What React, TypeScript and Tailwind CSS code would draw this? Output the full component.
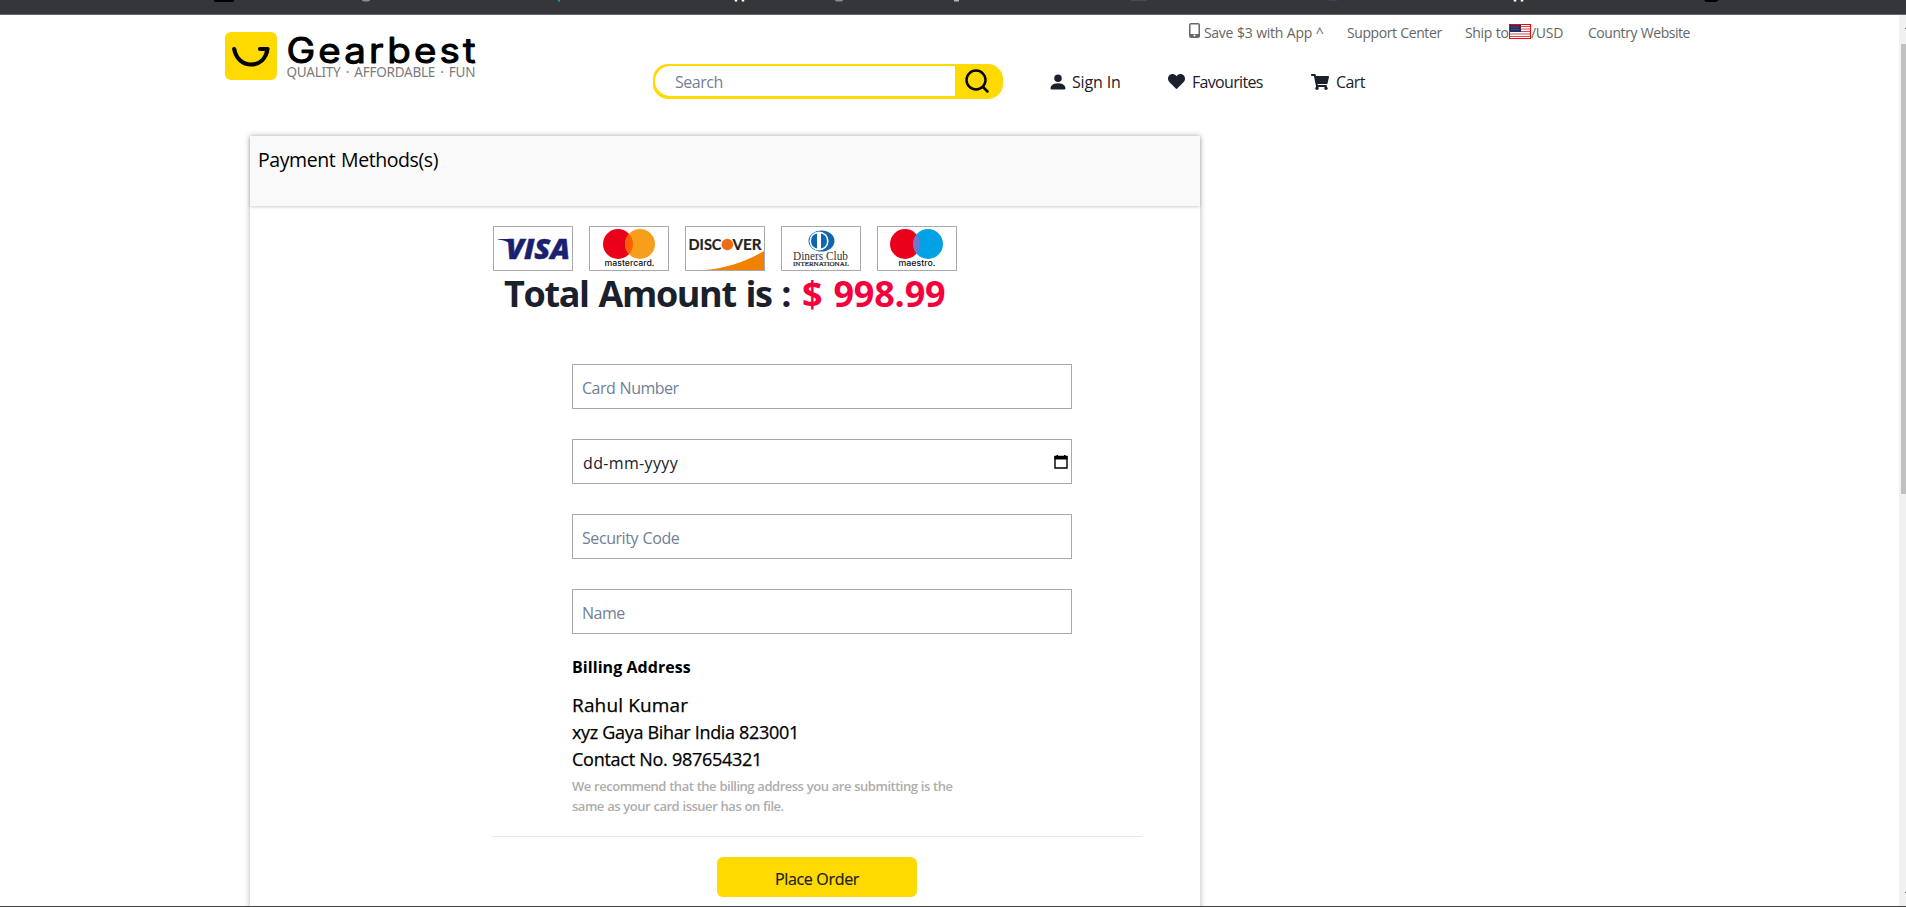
import React from "react";
import { FaHeart, FaShoppingCart } from "react-icons/fa";
import { BsPersonFill } from "react-icons/bs";

function BrowserEdge() {
  return (
    <div className="h-[15px] shrink-0 border-b border-[#67686c] bg-[#35363a]">
      <svg width="1906" height="4" className="block">
        <rect x="214" y="-2" width="20" height="4" rx="1" fill="#000" />
        <ellipse cx="366" cy="0" rx="4" ry="1.5" fill="#8a8b8e" />
        <rect x="558" y="0" width="2" height="1.5" fill="#12a5a5" />
        <path d="M736 0v1.5M743 0v1.5M1515 0v1.5M1522 0v1.5" stroke="#fff" strokeWidth="2.5" />
        <ellipse cx="839" cy="0" rx="4" ry="1.5" fill="#8a8b8e" />
        <rect x="954" y="0" width="5" height="1.5" fill="#b5b5b8" />
        <rect x="1131" y="0" width="16" height="1" fill="#4a4b50" />
        <rect x="1329" y="0" width="8" height="1" fill="#3b4160" />
        <path d="M1704 0h15l-3 2h-10z" fill="#000" />
      </svg>
    </div>
  );
}

function Logo() {
  return (
    <svg width="260" height="69" viewBox="0 -17 260 69" className="block shrink-0">
      <rect x="0" y="0" width="52" height="48" rx="6" fill="#ffda00" />
      <path d="M9.2 17C11 27 18 32.500 26 32.500C34.500 32.500 41 27 42.500 17H35" fill="none" stroke="#000" strokeWidth="4.200" strokeLinecap="round" strokeLinejoin="round" />
      <text transform="translate(61.500 30.500) scale(1.1 1)" textLength="172" lengthAdjust="spacing" fontSize="35" fontWeight="400" stroke="#000" strokeWidth="1" strokeLinejoin="round" strokeLinecap="round" className="font-['Inter',sans-serif]">Gearbest</text>
      <text x="61.500" y="44.500" textLength="189" lengthAdjust="spacing" fontSize="13.500" fill="#7b7b7b" wordSpacing="2" className="font-['Noto_Sans',sans-serif]">QUALITY · AFFORDABLE · FUN</text>
    </svg>
  );
}

function Flag() {
  return (
    <svg width="22" height="15" viewBox="0 0 22 15" className="block shrink-0">
      <rect width="22" height="15" fill="#fff" />
      <path d="M1 2.500h20M1 5h20M1 7.500h20M1 10h20M1 12.500h20" stroke="#cf4a58" strokeWidth="1.200" />
      <rect x="1" y="1" width="11" height="7" fill="#26305f" />
      <path d="M2.500 3h8M2.500 5.500h8" stroke="#6c78a8" strokeWidth="0.800" strokeDasharray="1 1" />
      <rect x="0.500" y="0.500" width="21" height="14" fill="none" stroke="#f00" />
    </svg>
  );
}

function Header() {
  return (
    <header className="flex h-[121px] shrink-0 pl-[225px]">
      <div className="w-[428px]"><Logo /></div>
      <div className="pt-[49px]">
        <div className="flex h-[35px] w-[350px] overflow-hidden rounded-[15px] bg-[#ffda00] pt-[2px] pl-[2px]">
          <div className="flex h-[30px] w-[300px] items-center rounded-l-[15px] bg-white pt-[2px] pl-[20px] text-[16px] tracking-[-0.03em] text-[#718096]">Search</div>
          <svg width="34" height="30" viewBox="0 0 34 30" className="ml-[4px]" fill="none" stroke="#000" strokeWidth="2.500" strokeLinecap="round">
            <circle cx="17" cy="14" r="9.500" />
            <path d="M24 21l4.500 4.500" />
          </svg>
        </div>
      </div>
      <div className="w-[700px]">
        <div className="flex h-[34px] items-center pl-[185px] text-[14px] tracking-[-0.032em] whitespace-nowrap text-[#666] [word-spacing:0.04em]">
          <svg width="11" height="15" viewBox="0 0 11 15" className="mr-[4px] mb-[3px] ml-px shrink-0">
            <path fillRule="evenodd" fill="#666" d="M2 0h7a2 2 0 0 1 2 2v11a2 2 0 0 1-2 2H2a2 2 0 0 1-2-2V2a2 2 0 0 1 2-2zm-.5 1.500v9.500h8V1.500zM4.500 12.500a1 1 0 1 0 2 0a1 1 0 1 0-2 0z" />
          </svg>
          <span className="w-[143px] tracking-[-0.022em]">Save $3 with App ^</span>
          <span className="w-[118px] tracking-[-0.03em]">Support Center</span>
          <span className="w-[44px] tracking-[-0.025em]">Ship to</span>
          <div className="mb-[2px]"><Flag /></div>
          <span className="w-[57px] tracking-[-0.02em]">/USD</span>
          <span>Country Website</span>
        </div>
        <div className="flex h-[65px] items-center pl-[45px] text-[16px] tracking-[-0.035em] whitespace-nowrap text-[#1a202c]">
          <BsPersonFill size={20} className="mr-[4px]" />
          <span className="w-[96px] tracking-[-0.01em]">Sign In</span>
          <FaHeart size={17} className="mr-[7px]" />
          <span className="w-[119px] tracking-[-0.042em]">Favourites</span>
          <FaShoppingCart size={18} className="mr-[7px]" />
          <span>Cart</span>
        </div>
      </div>
    </header>
  );
}

const frame = "h-[45px] w-[80px] border border-[#a9a9a9] bg-white";

function PaymentLogos() {
  return (
    <div className="flex gap-4">
      <svg viewBox="0 0 78 43" className={frame}>
        <text x="12" y="32" textLength="64" lengthAdjust="spacingAndGlyphs" fontSize="28" fontWeight="800" fontStyle="italic" fill="#1a1f71" stroke="#1a1f71" strokeWidth="0.500" className="font-['Open_Sans',sans-serif]">VISA</text>
        <path d="M4 12h12l2 6c-3-3-8-5-14-5.500z" fill="#1a1f71" />
      </svg>
      <svg viewBox="0 0 78 43" className={frame}>
        <circle cx="28" cy="17" r="15" fill="#eb001b" />
        <circle cx="50" cy="17" r="15" fill="#f79e1b" />
        <path d="M39 6.800a15 15 0 0 1 0 20.400a15 15 0 0 1 0-20.400z" fill="#ff5f00" />
        <text x="14.500" y="39" textLength="50" lengthAdjust="spacingAndGlyphs" fontSize="8.500" fontWeight="500" fill="#111" className="font-['Inter',sans-serif]">mastercard.</text>
      </svg>
      <svg viewBox="0 0 78 43" className={frame}>
        <path d="M19 43C42 41 61 34 78 24V43z" fill="#f08200" />
        <text x="2.500" y="23" textLength="33" lengthAdjust="spacingAndGlyphs" fontSize="15" fontWeight="700" fill="#222" stroke="#222" strokeWidth="0.200" className="font-['Lato',sans-serif]">DISC</text>
        <circle cx="41.300" cy="17.500" r="5.800" fill="#ed6b13" />
        <text x="46.500" y="23" textLength="29" lengthAdjust="spacingAndGlyphs" fontSize="15" fontWeight="700" fill="#222" stroke="#222" strokeWidth="0.200" className="font-['Lato',sans-serif]">VER</text>
      </svg>
      <svg viewBox="0 0 78 43" className={frame}>
        <ellipse cx="39.500" cy="14" rx="13" ry="10.500" fill="#0f68ae" />
        <circle cx="37" cy="14" r="9.600" fill="#fff" />
        <path d="M35 6.500v15a7.700 7.700 0 0 1 0-15zM39 6.500v15a7.700 7.700 0 0 0 0-15z" fill="#0f68ae" />
        <text x="11" y="33" textLength="55" lengthAdjust="spacingAndGlyphs" fontSize="11.500" fill="#333" className="font-['Liberation_Serif',serif]">Diners Club</text>
        <text x="11" y="39" textLength="56" lengthAdjust="spacingAndGlyphs" fontSize="6" fill="#222" stroke="#222" strokeWidth="0.200" className="font-['Liberation_Serif',serif]">INTERNATIONAL</text>
      </svg>
      <svg viewBox="0 0 78 43" className={frame}>
        <circle cx="27" cy="17" r="15" fill="#eb001b" />
        <circle cx="50" cy="17" r="15" fill="#00a2e5" />
        <path d="M38.500 7.500a15 15 0 0 1 0 19a15 15 0 0 1 0-19z" fill="#7375cf" />
        <text x="20.500" y="39" textLength="37" lengthAdjust="spacingAndGlyphs" fontSize="8.500" fontWeight="500" fill="#111" className="font-['Inter',sans-serif]">maestro.</text>
      </svg>
    </div>
  );
}

const field = "flex h-[45px] w-[500px] items-center border border-[#a9a9a9] pt-[2px] pl-[9px] text-[16px]";

function CalendarIcon() {
  return (
    <svg width="14" height="14" viewBox="0 0 14 14" className="mr-[3px] mb-[2px] ml-auto">
      <path d="M1 1.500h12V13H1z" fill="none" stroke="#000" strokeWidth="1.400" />
      <path d="M.5 1h13v3.500H.5zM2.500 0h1.500v2h-1.500zM10 0h1.500v2H10z" fill="#000" />
    </svg>
  );
}

function PaymentCard() {
  return (
    <main className="ml-[250px] flex h-[800px] w-[950px] flex-col bg-white shadow-[0_0_6px_rgba(0,0,0,0.3)]">
      <div className="h-[70px] shrink-0 bg-[#f9f9f9] pt-[9px] pl-[8px] text-[19.5px] leading-[30px] tracking-[-0.021em] text-black shadow-[0_1px_3px_rgba(0,0,0,0.2)] [word-spacing:0.05em]">Payment Methods(s)</div>
      <div className="pt-[20px] pl-[243px]">
        <PaymentLogos />
        <h1 className="flex h-[45px] items-center pl-[11px] text-[36px] font-bold tracking-[-0.038em] whitespace-nowrap text-[#1a202c] [word-spacing:0.05em]">
          <span className="w-[298px]">Total Amount is :</span>
          <span className="tracking-[-0.005em] text-[#f5003d]">$ 998.99</span>
        </h1>
        <form className="mt-[48px] ml-[79px] flex flex-col gap-[30px] text-[#718096] [word-spacing:0.05em]">
          <div className={field}><span className="tracking-[-0.033em]">Card Number</span></div>
          <div className={field}><span className="pl-[1px] tracking-[0.022em] text-[#1a202c]">dd-mm-yyyy</span><CalendarIcon /></div>
          <div className={field}><span className="tracking-[-0.027em]">Security Code</span></div>
          <div className={field}><span className="tracking-[-0.03em]">Name</span></div>
        </form>
        <section className="ml-[79px] pt-[21px] whitespace-nowrap text-black">
          <h2 className="text-[16px] leading-[24px] font-bold tracking-[0.004em]">Billing Address</h2>
          <div className="mt-[11px] font-medium [-webkit-text-stroke:0.250px_#000]">
            <p className="text-[19px] leading-[30px] tracking-[0.008em]">Rahul Kumar</p>
            <p className="-mt-px text-[18px] leading-[27px] tracking-[-0.018em]">xyz Gaya Bihar India 823001</p>
            <p className="text-[18px] leading-[27px] tracking-[-0.015em]">Contact No. 987654321</p>
          </div>
          <p className="mt-[3px] text-[13px] leading-[20px] font-semibold tracking-[-0.037em] text-[#adadad] [word-spacing:0.03em]">We recommend that the billing address you are submitting is the<br />same as your card issuer has on file.</p>
        </section>
        <div className="mt-[20px] -ml-px w-[650px] border-t border-[#e2e8f0]" />
        <button className="mt-[20px] ml-[224px] flex h-[40px] w-[200px] items-center justify-center rounded-md bg-[#ffda00] pt-[3px] text-[16px] font-medium tracking-[-0.02em] text-[#1a202c] [-webkit-text-stroke:0.200px_#1a202c]">Place Order</button>
      </div>
    </main>
  );
}

function Scrollbar() {
  return (
    <div className="flex w-[7px] shrink-0 flex-col items-end bg-[#f1f1f1]">
      <div className="mt-[13px] h-px w-px bg-[#505050]" />
      <div className="mt-[15px] h-[450px] w-[5px] bg-[#c1c1c1]" />
      <div className="mt-[398px] h-px w-px bg-[#505050]" />
    </div>
  );
}

export default function App() {
  return (
    <div className="flex h-[907px] w-[1906px] flex-col overflow-hidden border-b border-[#404144] bg-white font-['Open_Sans','Noto_Sans',sans-serif]">
      <BrowserEdge />
      <div className="flex min-h-0 flex-1">
        <div className="min-w-0 flex-1 overflow-hidden"><Header /><PaymentCard /></div>
        <Scrollbar />
      </div>
    </div>
  );
}
